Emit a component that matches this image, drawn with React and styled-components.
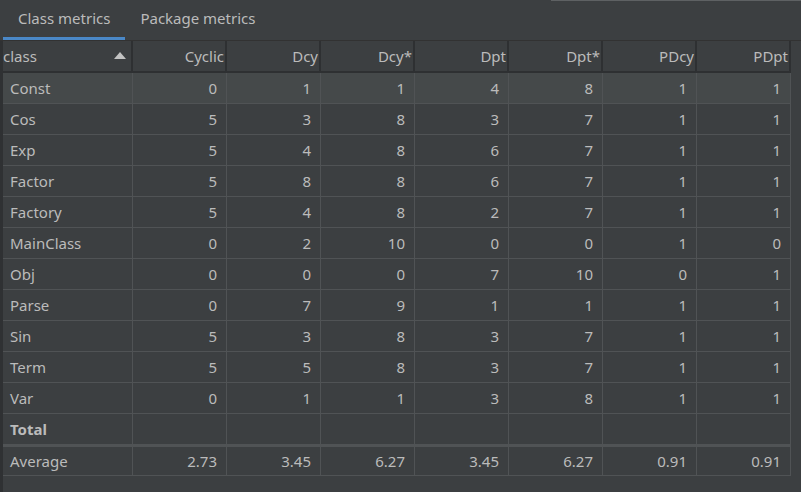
import React from "react";
import styled, { createGlobalStyle } from "styled-components";

const Global = createGlobalStyle`
  html, body { margin: 0; padding: 0; background: #3c3f41; }
  body { font-family: "Noto Sans", "Open Sans", sans-serif; color: #bbbbbb; }
`;

const Page = styled.div`
  width: 801px;
  height: 492px;
  background: #3c3f41;
  display: flex;
  flex-direction: column;
  overflow: hidden;
`;

const TopLine = styled.div`
  height: 1px;
  margin-left: 551px;
  background: #5e6163;
  flex-shrink: 0;
`;

const Tabs = styled.div`
  display: flex;
  height: 39px;
  padding-left: 3px;
  border-bottom: 1px solid #323232;
  flex-shrink: 0;
`;

const Tab = styled.div`
  display: flex;
  align-items: center;
  padding: 0 15px 2px 15px;
  font-size: 15px;
  color: #bbbbbb;
  border-bottom: 3px solid ${(p) => (p.$active ? "#4a88c7" : "transparent")};
  box-sizing: border-box;
`;

const Body = styled.div`
  display: flex;
  flex: 1;
`;

const LeftEdge = styled.div`
  width: 3px;
  background: #2f3133;
`;

const Table = styled.div`
  display: grid;
  grid-template-columns: 130px repeat(7, 94px);
  grid-template-rows: 32px;
  grid-auto-rows: 31px;
  align-content: start;
  font-size: 15px;
`;

const HeadCell = styled.div`
  display: flex;
  align-items: center;
  justify-content: ${(p) => (p.$left ? "space-between" : "flex-end")};
  padding: ${(p) => (p.$left ? "0 5px 0 0" : "0 1px 0 0")};
  border-right: 2px solid #2e3032;
  border-bottom: 2px solid #2e3032;
  box-sizing: border-box;
  color: #bbbbbb;
`;

const SortArrow = styled.span`
  width: 0;
  height: 0;
  border-left: 6px solid transparent;
  border-right: 6px solid transparent;
  border-bottom: 7px solid #c2c2c2;
  margin-top: -2px;
`;

const Cell = styled.div`
  display: flex;
  align-items: center;
  justify-content: ${(p) => (p.$left ? "flex-start" : "flex-end")};
  padding: ${(p) => (p.$left ? "0 0 0 7px" : "0 9px 0 0")};
  background: ${(p) => (p.$selected ? "#45494a" : "transparent")};
  border-right: 1px solid #505355;
  border-bottom: 1px solid #505355;
  border-top: ${(p) => (p.$double ? "2px solid #505355" : "0")};
  box-sizing: border-box;
  font-weight: ${(p) => (p.$bold ? 700 : 400)};
  color: #bbbbbb;
`;

const headers = ["Cyclic", "Dcy", "Dcy*", "Dpt", "Dpt*", "PDcy", "PDpt"];

const rows = [
  ["Const", 0, 1, 1, 4, 8, 1, 1],
  ["Cos", 5, 3, 8, 3, 7, 1, 1],
  ["Exp", 5, 4, 8, 6, 7, 1, 1],
  ["Factor", 5, 8, 8, 6, 7, 1, 1],
  ["Factory", 5, 4, 8, 2, 7, 1, 1],
  ["MainClass", 0, 2, 10, 0, 0, 1, 0],
  ["Obj", 0, 0, 0, 7, 10, 0, 1],
  ["Parse", 0, 7, 9, 1, 1, 1, 1],
  ["Sin", 5, 3, 8, 3, 7, 1, 1],
  ["Term", 5, 5, 8, 3, 7, 1, 1],
  ["Var", 0, 1, 1, 3, 8, 1, 1],
];

const average = ["Average", "2.73", "3.45", "6.27", "3.45", "6.27", "0.91", "0.91"];

export default function App() {
  return (
    <Page>
      <Global />
      <TopLine />
      <Tabs>
        <Tab $active>Class metrics</Tab>
        <Tab>Package metrics</Tab>
      </Tabs>
      <Body>
        <LeftEdge />
        <Table>
          <HeadCell $left>
            class
            <SortArrow />
          </HeadCell>
          {headers.map((h) => (
            <HeadCell key={h}>{h}</HeadCell>
          ))}
          {rows.map((r, i) =>
            r.map((v, j) => (
              <Cell key={`${i}-${j}`} $left={j === 0} $selected={i === 0}>
                {v}
              </Cell>
            ))
          )}
          <Cell $left $bold>Total</Cell>
          {headers.map((h) => (
            <Cell key={`t-${h}`} />
          ))}
          {average.map((v, j) => (
            <Cell key={`a-${j}`} $left={j === 0} $double>
              {v}
            </Cell>
          ))}
        </Table>
      </Body>
    </Page>
  );
}
